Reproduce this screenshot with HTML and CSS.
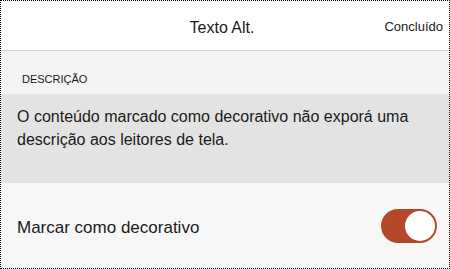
FILE: index.html
```html
<!DOCTYPE html>
<html lang="pt">
<head>
<meta charset="utf-8">
<link rel="stylesheet" href="styles.css">
</head>
<body>
<div class="panel">
  <header class="header">
    <div></div>
    <div class="title">Texto Alt.</div>
    <div class="done">Concluído</div>
  </header>
  <div class="band">DESCRIÇÃO</div>
  <div class="desc">O conteúdo marcado como decorativo não exporá uma descrição aos leitores de tela.</div>
  <div class="row">
    <span class="label">Marcar como decorativo</span>
    <span class="toggle"><span class="knob"></span></span>
  </div>
</div>
</body>
</html>
```

FILE: styles.css
```css
html, body {
  margin: 0;
  padding: 0;
  background: #ffffff;
}
.panel {
  box-sizing: border-box;
  width: 450px;
  height: 269px;
  border: 1px dotted #000000;
  display: flex;
  flex-direction: column;
  font-family: "Liberation Sans", Arial, sans-serif;
  color: #1a1a1a;
  background: #f7f7f7;
}
.header {
  display: grid;
  grid-template-columns: 1fr auto 1fr;
  align-items: start;
  height: 49px;
  background: #ffffff;
  border-bottom: 1px solid #d2d2d2;
  padding: 0 6px 0 0;
}
.title {
  font-size: 16px;
  line-height: 20px;
  padding-top: 17px;
}
.done {
  justify-self: end;
  font-size: 13px;
  line-height: 20px;
  padding-top: 16px;
}
.band {
  background: #f4f4f4;
  font-size: 11px;
  line-height: 14px;
  padding: 21px 0 8px 21px;
}
.desc {
  background: #e3e3e3;
  font-size: 16px;
  line-height: 23px;
  padding: 11px 16px 0 16px;
  height: 78px;
}
.row {
  flex: 1;
  display: flex;
  align-items: center;
  justify-content: space-between;
  padding: 0 12px 0 16px;
}
.label {
  font-size: 17px;
  line-height: 20px;
  padding-top: 4px;
}
.toggle {
  width: 56px;
  height: 34px;
  border-radius: 17px;
  background: #b7472a;
  display: flex;
  align-items: center;
  justify-content: flex-end;
  padding: 0 2px;
  box-sizing: border-box;
}
.knob {
  width: 30px;
  height: 30px;
  border-radius: 50%;
  background: #ffffff;
}
```
